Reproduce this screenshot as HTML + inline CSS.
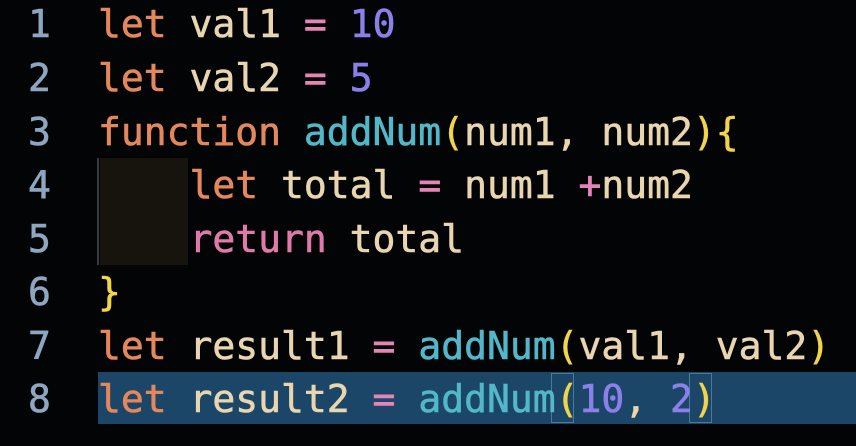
<!DOCTYPE html>
<html><head><meta charset="utf-8"><style>
body{margin:0;width:856px;height:446px;background:#030405;overflow:hidden;position:relative;font-family:"DejaVu Sans Mono","Liberation Mono",monospace;font-size:38px}
.l{position:absolute;left:0;height:54px;line-height:54px;white-space:pre;width:856px;-webkit-text-stroke:0.6px currentColor}
.n{position:absolute;left:28px;color:#8ea6bf}
.c{position:absolute;left:98px;color:#e9d5b0}
.k{color:#e4875c}.o{color:#e585b6}.num{color:#8b80ea}.f{color:#52b8c9}.p{color:#f0d54a}.r{color:#e07aa8}
</style></head><body>
<div style="position:absolute;left:100px;top:158px;width:88px;height:107px;background:#17140e"></div>
<div style="position:absolute;left:97px;top:158px;width:2px;height:107px;background:#3a3a3a"></div>
<div style="position:absolute;left:98px;top:372px;width:758px;height:52px;background:#1c4667"></div>
<div style="position:absolute;left:551px;top:373px;width:23px;height:50px;border:1px solid #4a7a99;box-sizing:border-box"></div>
<div style="position:absolute;left:689px;top:373px;width:23px;height:50px;border:1px solid #4a7a99;box-sizing:border-box"></div>
<div class="l" style="top:-3px"><span class="n">1</span><span class="c"><span class="k">let</span> val1 <span class="o">=</span> <span class="num">10</span></span></div>
<div class="l" style="top:51px"><span class="n">2</span><span class="c"><span class="k">let</span> val2 <span class="o">=</span> <span class="num">5</span></span></div>
<div class="l" style="top:105px"><span class="n">3</span><span class="c"><span class="k">function</span> <span class="f">addNum</span><span class="p">(</span>num1, num2<span class="p">){</span></span></div>
<div class="l" style="top:158px"><span class="n">4</span><span class="c">    <span class="k">let</span> total <span class="o">=</span> num1 <span class="o">+</span>num2</span></div>
<div class="l" style="top:212px"><span class="n">5</span><span class="c">    <span class="r">return</span> total</span></div>
<div class="l" style="top:265px"><span class="n">6</span><span class="c"><span class="p">}</span></span></div>
<div class="l" style="top:319px"><span class="n">7</span><span class="c"><span class="k">let</span> result1 <span class="o">=</span> <span class="f">addNum</span><span class="p">(</span>val1, val2<span class="p">)</span></span></div>
<div class="l" style="top:372px"><span class="n">8</span><span class="c"><span class="k">let</span> result2 <span class="o">=</span> <span class="f">addNum</span><span class="p">(</span><span class="num">10</span>, <span class="num">2</span><span class="p">)</span></span></div>
</body></html>
